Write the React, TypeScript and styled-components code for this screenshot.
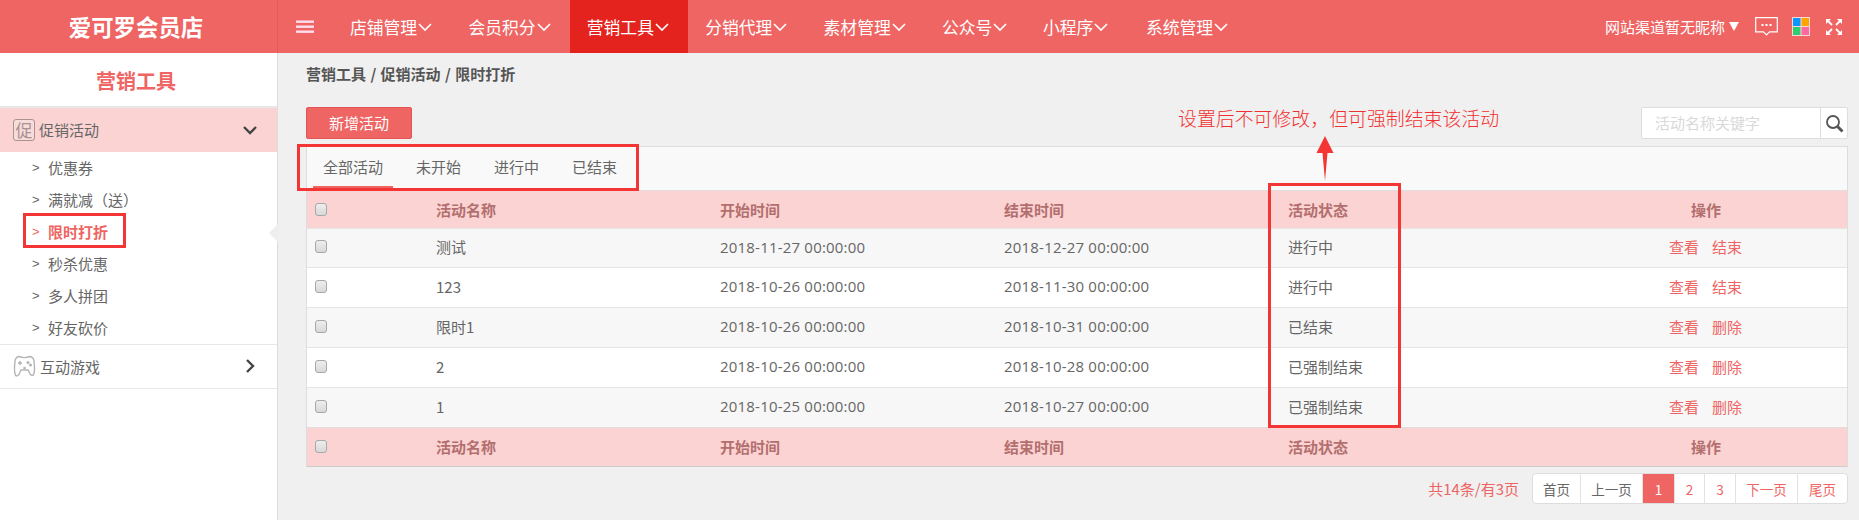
import React from 'react';
import styled, { createGlobalStyle } from 'styled-components';

const CJK = '"Noto Sans CJK SC", "Liberation Sans", sans-serif';
const RED = '#ee6564';

const Global = createGlobalStyle`
  html, body { margin: 0; padding: 0; background: #f0f0f0; }
  body { font-family: ${CJK}; color: #555; }
  * { box-sizing: border-box; }
`;

const Page = styled.div`
  position: relative;
  width: 1859px;
  height: 520px;
  overflow: hidden;
  background: #f0f0f0;
`;

const TopBar = styled.header`
  display: flex;
  align-items: stretch;
  height: 53px;
  background: ${RED};
  color: #fff;
`;
const Logo = styled.div`
  width: 278px;
  display: flex;
  align-items: center;
  justify-content: center;
  padding-right: 5px;
  font-size: 22.4px;
  font-weight: 700;
  line-height: 1;
  border-right: 1px solid #e65a59;
`;
const Burger = styled.div`
  width: 55px;
  padding-left: 18px;
  display: flex;
  align-items: center;
`;
const NavList = styled.nav`
  display: flex;
  align-items: stretch;
  flex: 1;
`;
const NavItem = styled.div<{ $active?: boolean; $w?: number }>`
  display: flex;
  align-items: center;
  width: ${p => p.$w ?? 118.4}px;
  padding-left: 17px;
  font-size: 16.8px;
  white-space: nowrap;
  background: ${p => (p.$active ? '#e5231e' : 'transparent')};
`;
const UserArea = styled.div`
  display: flex;
  align-items: center;
  padding-right: 16px;
`;
const UserName = styled.span`
  font-size: 15px;
  margin-right: 4px;
`;
const Caret = styled.span`
  width: 0;
  height: 0;
  border-left: 5.5px solid transparent;
  border-right: 5.5px solid transparent;
  border-top: 9px solid #fff;
  margin-right: 16px;
`;
const TopIcon = styled.svg<{ $gap?: number }>`
  display: block;
  margin-right: ${p => p.$gap ?? 0}px;
`;

const Body = styled.div`
  display: flex;
  height: 467px;
`;
const Sidebar = styled.aside`
  position: relative;
  width: 278px;
  flex: none;
  background: #fff;
  border-right: 1px solid #ddd;
`;
const SideTitle = styled.div`
  height: 55px;
  display: flex;
  align-items: center;
  justify-content: center;
  padding: 1px 5px 0 0;
  font-size: 20px;
  font-weight: 700;
  color: ${RED};
  border-bottom: 2px solid #e8e8e8;
`;
const GroupHead = styled.div<{ $open?: boolean }>`
  display: flex;
  align-items: center;
  height: 44px;
  padding: 0 19px 1px 13px;
  font-size: 15px;
  color: #666;
  background: ${p => (p.$open ? '#fbd3d3' : '#fff')};
  border-bottom: ${p => (p.$open ? '0' : '1px solid #e8e8e8')};
`;
const GroupLabel = styled.span`
  flex: 1;
  margin-left: 4px;
`;
const SealIcon = styled.span`
  width: 22px;
  height: 22px;
  display: flex;
  align-items: center;
  justify-content: center;
  border: 1.5px solid #ad9090;
  border-radius: 3px;
  font-size: 17px;
  line-height: 1;
  color: #ad9090;
  background: #f7dcdc;
`;
const SubList = styled.ul`
  list-style: none;
  margin: 0;
  padding: 0;
  border-bottom: 1px solid #e8e8e8;
`;
const SubItem = styled.li<{ $active?: boolean }>`
  display: flex;
  align-items: center;
  height: 32px;
  padding: 0 0 2px 32px;
  font-size: 15px;
  color: ${p => (p.$active ? RED : '#666')};
  font-weight: ${p => (p.$active ? 700 : 400)};
`;
const SubMark = styled.span`
  width: 16px;
  font-size: 13px;
  font-family: "Liberation Sans", sans-serif;
  font-weight: 400;
`;
const Notch = styled.span`
  position: absolute;
  right: -1px;
  top: 171px;
  width: 0;
  height: 0;
  border-top: 9px solid transparent;
  border-bottom: 9px solid transparent;
  border-right: 9px solid #eee;
`;

const Main = styled.main`
  flex: 1;
  padding: 0 11px 0 28px;
  min-width: 0;
`;
const Crumb = styled.div`
  height: 54px;
  display: flex;
  align-items: center;
  padding-bottom: 13px;
  font-size: 15px;
  font-weight: 700;
  word-spacing: 1px;
  color: #555;
  white-space: pre;
`;
const ToolRow = styled.div`
  display: flex;
  justify-content: space-between;
  height: 39px;
`;
const AddButton = styled.button`
  width: 106px;
  height: 32px;
  padding: 0 0 1px;
  font: 400 15px ${CJK};
  color: #fff;
  background: ${RED};
  border: 1px solid #e35554;
  border-radius: 2px;
`;
const SearchBox = styled.div`
  width: 207px;
  height: 32px;
  display: flex;
  background: #fff;
  border: 1px solid #ddd;
  border-radius: 2px;
`;
const SearchHint = styled.span`
  flex: 1;
  padding-left: 13px;
  font-size: 15px;
  line-height: 30px;
  color: #d9d9d9;
  border-right: 1px solid #ddd;
`;
const SearchButton = styled.span`
  width: 26px;
  display: flex;
  align-items: center;
  justify-content: center;
`;
const Panel = styled.section`
  border: 1px solid #ddd;
  border-bottom: 0;
`;
const Tabs = styled.div`
  height: 43px;
  display: flex;
  padding-left: 6px;
  background: #f9f9f9;
`;
const Tab = styled.div<{ $active?: boolean }>`
  height: 41px;
  display: flex;
  align-items: center;
  padding: 0 10px 1px;
  margin-right: 13px;
  font-size: 15px;
  color: #666;
  border-bottom: 2px solid ${p => (p.$active ? RED : 'transparent')};
`;
const Table = styled.table`
  width: 100%;
  table-layout: fixed;
  border-collapse: collapse;
`;
const HeadRow = styled.tr`
  height: 38px;
  background: #fbd3d3;
`;
const Th = styled.th<{ $center?: boolean }>`
  padding: 0 0 1px ${p => (p.$center ? 3 : 0)}px;
  font-size: 15px;
  font-weight: 700;
  color: #b36f6e;
  text-align: ${p => (p.$center ? 'center' : 'left')};
  border-top: 1px solid #e2dcdc;
`;
const FootRow = styled(HeadRow)`
  height: 39px;
  border-bottom: 1px solid #ccc;
`;
const Row = styled.tr<{ $odd?: boolean }>`
  height: 40px;
  background: ${p => (p.$odd ? '#f7f7f7' : '#fff')};
  &:first-child { height: 39px; }
`;
const Td = styled.td<{ $center?: boolean }>`
  padding: 0 0 3px ${p => (p.$center ? 2 : 0)}px;
  font-size: 15px;
  color: #666;
  text-align: ${p => (p.$center ? 'center' : 'left')};
  border-top: 1px solid #e5e5e5;
`;
const DateCell = styled(Td)`
  font-family: "Open Sans", ${CJK};
  letter-spacing: 0.2px;
`;
const CheckBox = styled.span`
  display: block;
  width: 12px;
  height: 13px;
  margin-left: 8px;
  background: linear-gradient(#eee, #d8d8d8);
  border: 1px solid #a8a8a8;
  border-radius: 3px;
`;
const OpLink = styled.a`
  color: ${RED};
  margin: 0 6.5px;
`;
const Pager = styled.div`
  display: flex;
  justify-content: flex-end;
  align-items: center;
  margin-top: 6px;
`;
const PagerTotal = styled.span`
  font-size: 15px;
  color: ${RED};
  margin-right: 13px;
`;
const PagerBox = styled.div`
  display: flex;
  height: 31px;
  background: #fff;
  border: 1px solid #ddd;
  border-radius: 4px;
`;
const PageCell = styled.span<{ $w: number; $active?: boolean; $muted?: boolean }>`
  width: ${p => p.$w}px;
  display: flex;
  align-items: center;
  justify-content: center;
  font-size: 13.5px;
  color: ${p => (p.$active ? '#fff' : p.$muted ? '#666' : RED)};
  background: ${p => (p.$active ? RED : 'transparent')};
  border-right: 1px solid #e2e2e2;
  &:last-child { border-right: 0; }
`;

const MarkBox = styled.div<{ $x: number; $y: number; $w: number; $h: number }>`
  position: absolute;
  left: ${p => p.$x}px;
  top: ${p => p.$y}px;
  width: ${p => p.$w}px;
  height: ${p => p.$h}px;
  border: 3px solid #f33535;
  pointer-events: none;
`;
const Note = styled.div`
  position: absolute;
  left: 1178px;
  top: 104px;
  font-size: 18.9px;
  line-height: 28px;
  font-weight: 300;
  color: #f22f2f;
  white-space: nowrap;
`;
const Arrow = styled.svg`
  position: absolute;
  left: 1315px;
  top: 135px;
`;

const Chevron = ({ color = '#fff', dir = 'down', size = 16 }: { color?: string; dir?: 'down' | 'right'; size?: number }) => (
  <svg width={size} height={size} viewBox="0 0 16 16" style={{ flex: 'none' }}>
    <polyline
      points={dir === 'down' ? '2,5 8,11 14,5' : '5,2 11,8 5,14'}
      fill="none"
      stroke={color}
      strokeWidth={dir === 'down' && color === '#fff' ? 1.6 : 2.4}
    />
  </svg>
);

const Hamburger = () => (
  <svg width="18" height="14" viewBox="0 0 18 14">
    <rect y="0.5" width="18" height="2.4" fill="#fde" />
    <rect y="5.5" width="18" height="2.4" fill="#fde" />
    <rect y="10.5" width="18" height="2.4" fill="#fde" />
  </svg>
);

const GameIcon = () => (
  <svg width="23" height="22" viewBox="0 0 23 22" fill="none" stroke="#b4b4b4" strokeWidth="1.4" style={{ flex: 'none' }}>
    <path d="M6 1.500c3 1.200 8 1.200 11 0 2 .4 3.600 1.600 4 4.500.5 4.500 1.200 10-.4 13.500-1 1.400-2.600 1-3.400-.3L15 15H8l-2.200 4.700c-.8 1.300-2.400 1.700-3.400.3C.8 16.500 1.500 10.500 2 6c.4-2.900 2-4.100 4-4.500z" />
    <path d="M5 8h4M7 6v4" />
    <circle cx="15" cy="7.500" r=".8" fill="#b4b4b4" />
    <circle cx="17.500" cy="10" r=".8" fill="#b4b4b4" />
    <circle cx="11.500" cy="13" r=".6" fill="#b4b4b4" />
  </svg>
);

const rows = [
  ['测试', '2018-11-27 00:00:00', '2018-12-27 00:00:00', '进行中', '结束'],
  ['123', '2018-10-26 00:00:00', '2018-11-30 00:00:00', '进行中', '结束'],
  ['限时1', '2018-10-26 00:00:00', '2018-10-31 00:00:00', '已结束', '删除'],
  ['2', '2018-10-26 00:00:00', '2018-10-28 00:00:00', '已强制结束', '删除'],
  ['1', '2018-10-25 00:00:00', '2018-10-27 00:00:00', '已强制结束', '删除'],
];

const HeadCells = () => (
  <>
    <Th><CheckBox /></Th>
    <Th>活动名称</Th>
    <Th>开始时间</Th>
    <Th>结束时间</Th>
    <Th>活动状态</Th>
    <Th $center>操作</Th>
  </>
);

export default function App() {
  return (
    <Page>
      <Global />
      <TopBar>
        <Logo>爱可罗会员店</Logo>
        <Burger><Hamburger /></Burger>
        <NavList>
          <NavItem>店铺管理<Chevron /></NavItem>
          <NavItem>会员积分<Chevron /></NavItem>
          <NavItem $active>营销工具<Chevron /></NavItem>
          <NavItem>分销代理<Chevron /></NavItem>
          <NavItem>素材管理<Chevron /></NavItem>
          <NavItem $w={101}>公众号<Chevron /></NavItem>
          <NavItem $w={103}>小程序<Chevron /></NavItem>
          <NavItem>系统管理<Chevron /></NavItem>
        </NavList>
        <UserArea>
          <UserName>网站渠道暂无昵称</UserName>
          <Caret />
          <TopIcon $gap={14} width="23" height="19" viewBox="0 0 23 19" fill="none">
            <path d="M.7.7h21.600v14.100h-7.800l-3 3-3-3H.7z" stroke="#fff" strokeWidth="1.200" />
            <rect x="6.500" y="7" width="2" height="2" fill="#fff" />
            <rect x="10.500" y="7" width="2" height="2" fill="#fff" />
            <rect x="14.500" y="7" width="2" height="2" fill="#fff" />
          </TopIcon>
          <TopIcon $gap={15} width="18" height="19" viewBox="0 0 18 19">
            <rect width="18" height="19" fill="#fff" opacity=".75" />
            <rect x="1" y="1" width="7.500" height="8" fill="#0a96ff" />
            <rect x="9.500" y="1" width="7.500" height="8" fill="#ffa500" />
            <rect x="1" y="10" width="7.500" height="8" fill="#2ecc71" />
            <rect x="9.500" y="10" width="7.500" height="8" fill="#ff69a0" />
          </TopIcon>
          <TopIcon width="18" height="18" viewBox="0 0 18 18" fill="#fff" stroke="#fff">
            <path d="M1 1h5L1 6zM17 1h-5l5 5zM1 17h5l-5-5zM17 17h-5l5-5z" stroke="none" />
            <path d="M3 3l4 4M15 3l-4 4M3 15l4-4M15 15l-4-4" strokeWidth="1.800" />
          </TopIcon>
        </UserArea>
      </TopBar>
      <Body>
        <Sidebar>
          <SideTitle>营销工具</SideTitle>
          <GroupHead $open>
            <SealIcon>促</SealIcon>
            <GroupLabel>促销活动</GroupLabel>
            <Chevron color="#444" />
          </GroupHead>
          <SubList>
            {['优惠券', '满就减（送）', '限时打折', '秒杀优惠', '多人拼团', '好友砍价'].map(t => (
              <SubItem key={t} $active={t === '限时打折'}><SubMark>&gt;</SubMark>{t}</SubItem>
            ))}
          </SubList>
          <GroupHead>
            <GameIcon />
            <GroupLabel>互动游戏</GroupLabel>
            <Chevron color="#444" dir="right" />
          </GroupHead>
          <Notch />
        </Sidebar>
        <Main>
          <Crumb>营销工具 / 促销活动 / 限时打折</Crumb>
          <ToolRow>
            <AddButton>新增活动</AddButton>
            <SearchBox>
              <SearchHint>活动名称关键字</SearchHint>
              <SearchButton>
                <svg width="19" height="19" viewBox="0 0 19 19" fill="none" stroke="#555">
                  <circle cx="8" cy="8" r="6" strokeWidth="1.800" />
                  <path d="M12.500 12.500l5 5" strokeWidth="3" />
                </svg>
              </SearchButton>
            </SearchBox>
          </ToolRow>
          <Panel>
            <Tabs>
              <Tab $active>全部活动</Tab>
              <Tab>未开始</Tab>
              <Tab>进行中</Tab>
              <Tab>已结束</Tab>
            </Tabs>
            <Table>
              <colgroup>
                <col style={{ width: 129 }} />
                <col style={{ width: 284 }} />
                <col style={{ width: 284 }} />
                <col style={{ width: 284 }} />
                <col style={{ width: 274 }} />
                <col />
              </colgroup>
              <thead><HeadRow><HeadCells /></HeadRow></thead>
              <tbody>
                {rows.map((r, i) => (
                  <Row key={i} $odd={i % 2 === 0}>
                    <Td><CheckBox /></Td>
                    <Td>{r[0]}</Td>
                    <DateCell>{r[1]}</DateCell>
                    <DateCell>{r[2]}</DateCell>
                    <Td>{r[3]}</Td>
                    <Td $center><OpLink>查看</OpLink><OpLink>{r[4]}</OpLink></Td>
                  </Row>
                ))}
              </tbody>
              <tfoot><FootRow><HeadCells /></FootRow></tfoot>
            </Table>
          </Panel>
          <Pager>
            <PagerTotal>共14条/有3页</PagerTotal>
            <PagerBox>
              <PageCell $w={48} $muted>首页</PageCell>
              <PageCell $w={62} $muted>上一页</PageCell>
              <PageCell $w={32} $active>1</PageCell>
              <PageCell $w={30}>2</PageCell>
              <PageCell $w={31}>3</PageCell>
              <PageCell $w={62}>下一页</PageCell>
              <PageCell $w={49}>尾页</PageCell>
            </PagerBox>
          </Pager>
        </Main>
      </Body>
      <MarkBox $x={23} $y={213} $w={103} $h={35} />
      <MarkBox $x={297} $y={144} $w={342} $h={47} />
      <MarkBox $x={1268} $y={183} $w={133} $h={245} />
      <Note>设置后不可修改，但可强制结束该活动</Note>
      <Arrow width="20" height="47" viewBox="0 0 20 47">
        <path d="M10 1L18.500 18H12.500L10 46L7.500 18H1.500z" fill="#f33535" />
      </Arrow>
    </Page>
  );
}
